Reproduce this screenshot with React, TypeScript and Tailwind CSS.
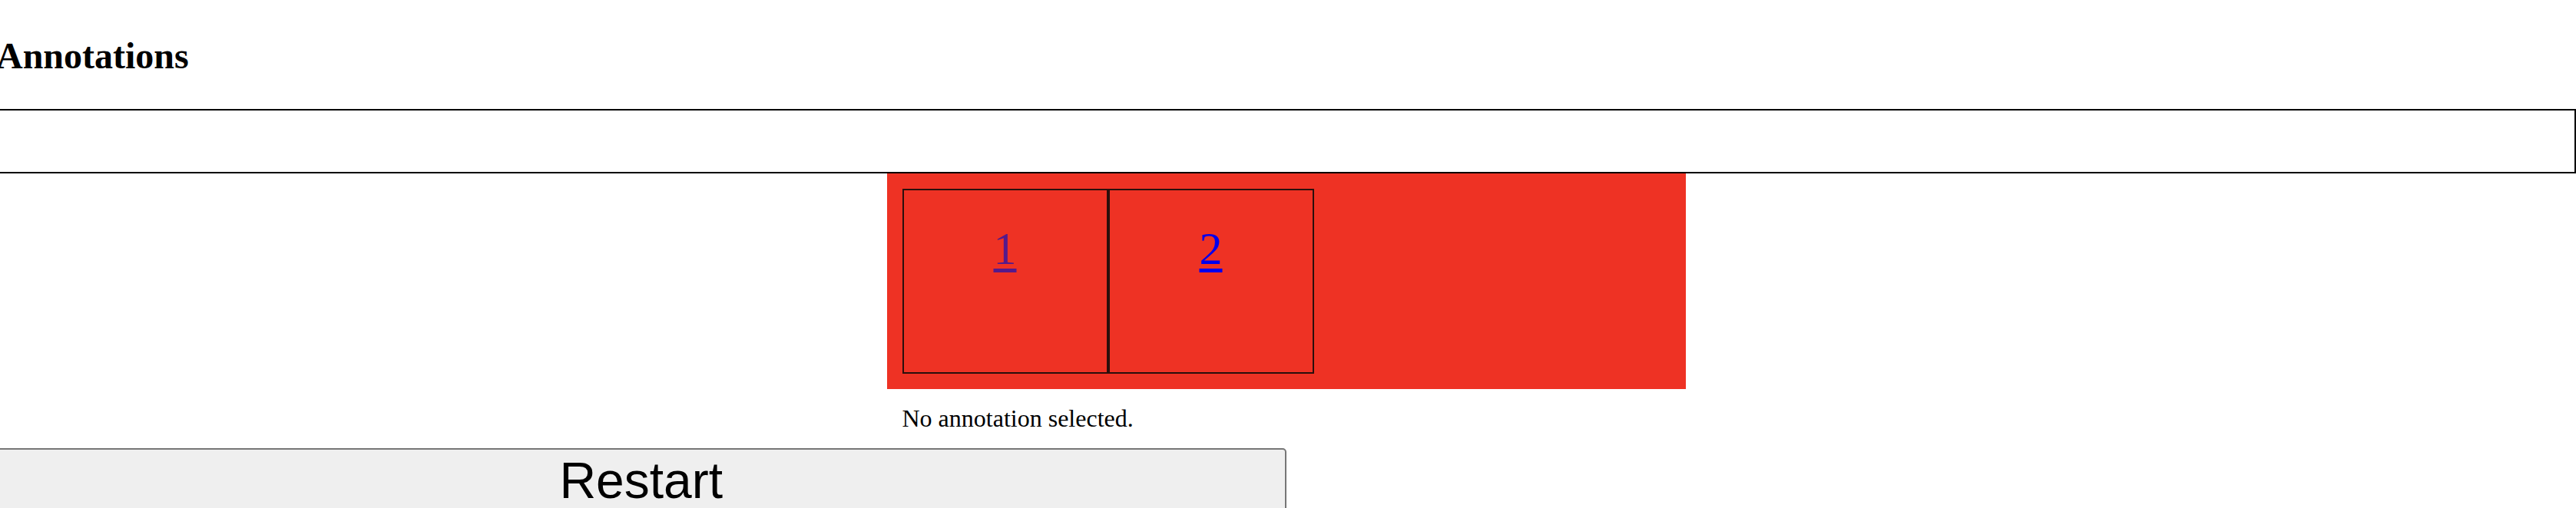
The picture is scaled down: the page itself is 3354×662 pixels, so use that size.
import React from "react";

export default function App() {
  return (
    <div className="bg-white w-[3354px] h-[662px] overflow-hidden font-['Liberation_Serif',serif] text-black">
      <div className="ml-[-5px]">
        <h2 className="mt-[46px] mb-[43px] text-[48px] leading-[53px] font-bold whitespace-nowrap">
          Annotations
        </h2>
        <input
          className="block w-full h-[84px] border-2 border-black bg-white outline-none"
          type="text"
          readOnly
        />
        <div className="w-[1040px] mx-auto">
          <div className="bg-[#ee3224] p-[20px] flex">
            <div className="w-[268px] h-[241px] border-2 border-[#2a0f0c] flex justify-center pt-[42px]">
              <a
                href="#"
                className="text-[60px] leading-[69px] h-[69px] text-[#551a8b] underline decoration-[5px] underline-offset-[6px]"
              >
                1
              </a>
            </div>
            <div className="w-[268px] h-[241px] border-2 border-[#2a0f0c] flex justify-center pt-[42px]">
              <a
                href="#"
                className="text-[60px] leading-[69px] h-[69px] text-[#0000ee] underline decoration-[5px] underline-offset-[6px]"
              >
                2
              </a>
            </div>
          </div>
          <p className="my-[20px] pl-[20px] text-[32px] leading-[37px]">
            No annotation selected.
          </p>
        </div>
        <button className="block w-1/2 h-[100px] p-0 border-2 border-[#767676] rounded-[5px] bg-[#efefef] font-['Liberation_Sans',Arial,sans-serif] text-[66px] text-black text-center">
          <div className="h-[96px] leading-[80px]">Restart</div>
        </button>
      </div>
    </div>
  );
}
